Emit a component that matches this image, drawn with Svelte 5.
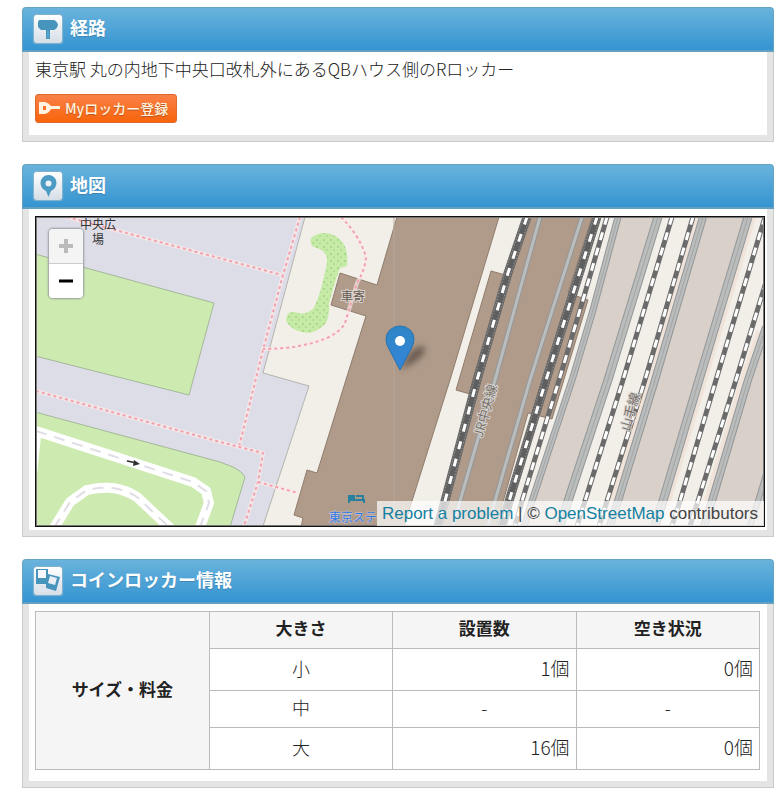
<script>
  const rows = [
    { size: '小', total: '1個', free: '0個' },
    { size: '中', total: '-', free: '-' },
    { size: '大', total: '16個', free: '0個' }
  ];

  const platforms = [
    'M618 217L593 310L573 377L532 501L524 526H562L570 495L608 380L658 217Z',
    'M703 217L655 380L618 501L610 526H655L663 501L699 380L748 217Z',
    'M764 334L748 380L712 501L704 526H764Z'
  ];

  const edges = [
    { d: 'M540 217L495 380L460 501L453 526', w: 5 },
    { d: 'M582 217L530 380L495 501L488 526', w: 5 },
    { d: 'M618 217L593 310L573 377L532 501L524 526', w: 7 },
    { d: 'M658 217L608 380L570 495L560 526', w: 9 },
    { d: 'M703 217L655 380L618 501L610 526', w: 8 },
    { d: 'M748 217L699 380L663 501L655 526', w: 9 },
    { d: 'M766 327L748 380L712 501L704 526', w: 8 },
    { d: 'M766 474L758 501L750 526', w: 6 }
  ];

  const mainTracks = [
    'M527 217L508 273L477 380L445 501L438 526',
    'M597 217L575 287L547 377L510 498L502 526'
  ];

  const tracks = [
    'M607 217L585 293L560 377L522 501L515 526',
    'M672 217L623 380L585 501L577 526',
    'M693 217L645 380L607 501L599 526',
    'M765 217L716 380L680 501L672 526',
    'M766 282L736 380L698 501L690 526'
  ];

  const footpaths = [
    'M67 217L282 275',
    'M300 217L283 275L263 350L239 447',
    'M341 217Q360 236 366 257Q365 270 357 283L345 323Q340 332 327 338Q300 349 263 349',
    'M36 391L220 442L263 453L258 482L244 526',
    'M258 482L298 493'
  ];

  const roads = [
    'M36 431L193 482L206 491L209 503L200 527',
    'M54 528L70 502L87 490Q100 487 113 488Q126 490 137 497L170 528'
  ];
</script>

<main>
  <section class="panel">
    <header>
      <svg class="icon" viewBox="0 0 28 28" aria-hidden="true">
        <rect width="28" height="28" rx="2" fill="url(#tile)" />
        <path d="M5 5H20Q23 6 24 10Q23 14 20 15H16V24H12V15H7L4 12V7Z" fill="#4794bd" />
        <path d="M13 16H15V23H13Z" fill="#57a5cf" />
      </svg>
      <h2>経路</h2>
    </header>
    <div class="frame">
      <div class="body route">
        <p>東京駅 丸の内地下中央口改札外にあるQBハウス側のRロッカー</p>
        <button class="register" type="button">
          <svg viewBox="0 0 22 14" aria-hidden="true">
            <path fill-rule="evenodd" d="M0 1H6Q10 2 12 5H21V8H12Q10 12 6 13H0ZM4 5V9H7V5Z" fill="#fff3df" />
          </svg>
          <span>Myロッカー登録</span>
        </button>
      </div>
    </div>
  </section>

  <section class="panel">
    <header>
      <svg class="icon" viewBox="0 0 28 28" aria-hidden="true">
        <defs>
          <linearGradient id="tile" x2="0" y2="1">
            <stop offset="0" stop-color="#ffffff" />
            <stop offset="1" stop-color="#d5dde6" />
          </linearGradient>
        </defs>
        <rect width="28" height="28" rx="2" fill="url(#tile)" />
        <path fill-rule="evenodd" d="M14.500 3A8 8 0 0 1 22.500 11Q22.500 16 17 19L14.500 25L12 19Q6.500 16 6.500 11A8 8 0 0 1 14.500 3ZM14.500 8.500A3 3 0 1 0 14.500 14.500A3 3 0 1 0 14.500 8.500Z" fill="#4b9bc4" />
      </svg>
      <h2>地図</h2>
    </header>
    <div class="frame">
      <div class="body mapbody">
        <div class="map">
          <svg class="tiles" viewBox="36 217 728 309" preserveAspectRatio="xMidYMid slice" role="img" aria-label="地図">
            <defs>
              <pattern id="trees" width="7" height="7" patternUnits="userSpaceOnUse">
                <rect width="7" height="7" fill="#c6eba6" />
                <circle cx="2" cy="2" r="1" fill="#a3cf88" />
                <circle cx="5" cy="5" r="1" fill="#add993" />
              </pattern>
              <linearGradient id="pin" x2="0" y2="1">
                <stop offset="0" stop-color="#2f86c6" />
                <stop offset="1" stop-color="#3485d8" />
              </linearGradient>
              <filter id="soft" x="-50%" y="-50%" width="200%" height="200%">
                <feGaussianBlur stdDeviation="3" />
              </filter>
            </defs>
            <rect x="36" y="217" width="728" height="309" fill="#dddde8" />
            <path d="M305 217L263 373L309 386L263 526H764V217Z" fill="#f2efe9" stroke="#b5b3ae" />
            <g fill="#cdebb0" stroke="#a5b79a">
              <path d="M35 254L214 303L189 395L35 356Z" />
              <path d="M35 412L220 462L233 467Q242 471 245 477L230 527H35Z" />
            </g>
            <path d="M34 431L41 436L36 484Z" fill="#fff" />
            {#each roads as d}
              <path {d} class="road" />
              <path {d} class="roaddash" />
            {/each}
            <path d="M127 461L137 463" stroke="#333" stroke-width="1.5" />
            <path d="M134 460L140 464L133 466Z" fill="#333" />
            <path d="M311 238Q320 231 331 234Q350 241 347 266L340 268Q334 284 329 304Q330 314 326 323Q318 332 308 333Q290 331 286 320Q287 310 295 312Q304 316 313 309Q321 295 327 262Q328 252 317 248Q309 247 311 238Z" fill="url(#trees)" />
            {#each platforms.slice(1) as d}
              <path {d} fill="none" stroke="#f0e4da" stroke-width="16" />
            {/each}
            {#each platforms as d}
              <path {d} fill="#d9d0c9" />
            {/each}
            <g fill="#b09b8a" stroke="#8f7c6d">
              <path d="M397 217L377 285L340 273L331 305L366 316L349 370L317 473L307 470L294 515L303 518L301 527H404L412 501L450 380L499 217Z" />
              <path d="M527 217L509 276L491 271L456 390L470 394L437 527H496L528 413L552 419L588 300L568 293L592 217Z" />
            </g>
            <path d="M394 217V526" stroke="#b7a596" />
            {#each edges as edge}
              <path d={edge.d} fill="none" stroke="#929799" stroke-width={edge.w} />
              <path d={edge.d} fill="none" stroke="#bbbcbc" stroke-width={edge.w - 2} />
              {#if edge.w > 6}
                <path d={edge.d} fill="none" stroke="#a3a6a7" />
              {/if}
            {/each}
            {#each mainTracks as d}
              <path {d} fill="none" stroke="#686868" stroke-width="9" />
              <path {d} fill="none" stroke="#999" stroke-width="7" stroke-dasharray="1 2" />
              <path {d} fill="none" stroke="#5f5f5f" stroke-width="5" />
              <path {d} fill="none" stroke="#fff" stroke-width="3" stroke-dasharray="8 10" />
            {/each}
            {#each tracks as d}
              <path {d} fill="none" stroke="#6b6b6b" stroke-width="5" />
              <path {d} fill="none" stroke="#fff" stroke-width="3" stroke-dasharray="8 8" />
            {/each}
            {#each footpaths as d}
              <path {d} fill="none" stroke="#fbe9ea" stroke-width="4" stroke-opacity="0.7" />
              <path {d} fill="none" stroke="#f0a3ad" stroke-width="2" stroke-dasharray="3 3" />
            {/each}
            <g class="place">
              <text x="98" y="229">中央広</text>
              <text x="98" y="244">場</text>
              <text x="353" y="301" class="faded">車寄</text>
            </g>
            <text class="hotel" x="329" y="522">東京ステ</text>
            <path d="M349 495V503M349 500H364V503M351 496H354V498H351ZM356 496H363V499" fill="none" stroke="#28809f" stroke-width="2" />
            <text class="rail" transform="translate(486 411) rotate(-74)" y="4">JR中央線</text>
            <text class="rail" transform="translate(631 412) rotate(-74)" y="4">山手線</text>
            <path d="M400 370L410 352Q425 341 425 350Q422 360 400 370Z" fill="#3d332b" opacity="0.6" filter="url(#soft)" />
            <path d="M400 370L389 349Q386 344 386 339A14 13 0 0 1 414 339Q414 344 411 349Z" fill="url(#pin)" stroke="#2873b0" />
            <circle cx="400" cy="341" r="5" fill="#fff" />
          </svg>
          <div class="zoom">
            <button type="button" disabled aria-label="Zoom in">
              <svg viewBox="0 0 16 16" aria-hidden="true"><path d="M8 1V15M1 8H15" stroke="#bbb" stroke-width="4" /></svg>
            </button>
            <button type="button" aria-label="Zoom out">
              <svg viewBox="0 0 16 16" aria-hidden="true"><path d="M1 8H15" stroke="#000" stroke-width="3" /></svg>
            </button>
          </div>
          <div class="credit">
            <a href="#report">Report a problem</a> | © <a href="#osm">OpenStreetMap</a> contributors
          </div>
        </div>
      </div>
    </div>
  </section>

  <section class="panel">
    <header>
      <svg class="icon" viewBox="0 0 28 28" aria-hidden="true">
        <rect width="28" height="28" rx="2" fill="url(#tile)" />
        <path d="M2 2H14V7L26 10L22 24L12 21V17H2Z" fill="#4794bd" />
        <path d="M4 3H12V11H4Z" fill="#f6f8fb" />
        <path d="M16 9L23 11L21 18L14 16Z" fill="#e9eef4" />
        <path d="M3 18H11V21L20 25H3Z" fill="#dfe5ec" />
      </svg>
      <h2>コインロッカー情報</h2>
    </header>
    <div class="frame">
      <div class="body info">
        <table>
          <tbody>
            <tr>
              <th class="side" rowspan="4" scope="rowgroup">サイズ・料金</th>
              <th scope="col">大きさ</th>
              <th scope="col">設置数</th>
              <th scope="col">空き状況</th>
            </tr>
            {#each rows as row}
              <tr class:tall={row.total !== '-'}>
                <td>{row.size}</td>
                <td class:num={row.total !== '-'}>{row.total}</td>
                <td class:num={row.free !== '-'}>{row.free}</td>
              </tr>
            {/each}
          </tbody>
        </table>
      </div>
    </div>
  </section>
</main>

<style>
  :global(body) {
    margin: 0;
    background: #fff;
  }

  main {
    display: flex;
    flex-direction: column;
    gap: 22px;
    padding: 7px 6px 10px 22px;
    font-family: 'Noto Sans CJK JP', sans-serif;
    color: #222;
  }

  header {
    box-sizing: border-box;
    display: flex;
    align-items: center;
    gap: 8px;
    height: 45px;
    padding: 0 11px;
    border: 1px solid #66a3c2;
    border-bottom: 2px solid #649fc0;
    border-radius: 4px 4px 0 0;
    background: linear-gradient(#69b3dc, #3594d1);
  }

  .icon {
    width: 28px;
    height: 28px;
    flex: none;
    border-radius: 2px;
    box-shadow: 0 0 1px 1px #84b4cf;
  }

  h2 {
    margin: 0;
    padding-bottom: 4px;
    font-size: 18px;
    line-height: 26px;
    font-weight: 700;
    color: #fff;
    text-shadow: 0 1px 1px #3d86b3;
  }

  .frame {
    padding: 0 6px 6px;
    border: 1px solid #cbcbcb;
    border-top: 0;
    background: #e4e4e4;
  }

  .body {
    background: #fff;
  }

  .route {
    padding: 5px 6px 12px;
  }

  p {
    margin: 0 0 13px;
    font-size: 17px;
    line-height: 24px;
    font-weight: 300;
  }

  .register {
    display: flex;
    align-items: center;
    gap: 4px;
    height: 29px;
    padding: 0 8px 2px 3px;
    border: 1px solid #dd6a2d;
    border-radius: 3px;
    background: linear-gradient(#fa8048, #f9640b);
    color: #fff3df;
    font-family: inherit;
    font-size: 14px;
    line-height: 20px;
    font-weight: 500;
    text-shadow: 0 1px 1px #b6541f;
  }

  .register svg {
    width: 22px;
    height: 14px;
  }

  .mapbody {
    padding: 7px 2px 3px 6px;
  }

  .map {
    position: relative;
    box-sizing: border-box;
    height: 311px;
    border: 1px solid #111;
    outline: 1px solid #777;
    outline-offset: -2px;
    overflow: hidden;
  }

  .tiles {
    display: block;
    width: 100%;
    height: 100%;
  }

  .road {
    fill: none;
    stroke: #fff;
    stroke-width: 10;
  }

  .roaddash {
    fill: none;
    stroke: #e0dde6;
    stroke-width: 2;
    stroke-dasharray: 11 8;
  }

  .place {
    font-size: 12px;
    fill: #333;
    text-anchor: middle;
  }

  .faded {
    fill: #665b53;
    stroke: #d8d0ca;
    stroke-width: 2;
    paint-order: stroke;
  }

  .hotel {
    font-size: 12px;
    fill: #2f78e0;
    stroke: #cfc8d0;
    stroke-width: 1;
    paint-order: stroke;
  }

  .rail {
    font-size: 13px;
    fill: #77716c;
    stroke: #d8d4d0;
    stroke-width: 2;
    paint-order: stroke;
    text-anchor: middle;
  }

  .zoom {
    position: absolute;
    top: 12px;
    left: 13px;
    display: flex;
    flex-direction: column;
    border-radius: 4px;
    overflow: hidden;
    box-shadow: 0 0 2px 1px #9a9aa2;
  }

  .zoom button {
    display: grid;
    place-items: center;
    width: 34px;
    height: 34px;
    padding: 0;
    border: 0;
    background: #fff;
  }

  .zoom button:disabled {
    height: 35px;
    border-bottom: 1px solid #ccc;
    background: #f4f4f4;
  }

  .zoom svg {
    width: 16px;
    height: 16px;
  }

  .credit {
    position: absolute;
    right: 0;
    bottom: 0;
    padding: 0 6px 0 5px;
    background: rgb(255 255 255 / 70%);
    color: #444;
    font-family: 'Liberation Sans', sans-serif;
    font-size: 17px;
    line-height: 25px;
    white-space: nowrap;
  }

  .credit a {
    color: #1480a0;
    text-decoration: none;
  }

  .info {
    padding: 7px 7px 11px 6px;
  }

  table {
    width: 100%;
    border-collapse: collapse;
    table-layout: fixed;
  }

  th,
  td {
    box-sizing: border-box;
    height: 37px;
    padding: 0 6px 4px;
    border: 1px solid #bbb;
    text-align: center;
    line-height: 24px;
  }

  th {
    background: #f5f5f5;
    font-size: 17px;
    font-weight: 700;
  }

  .side {
    width: 24%;
  }

  td {
    font-size: 18px;
    font-weight: 300;
  }

  .tall td {
    height: 42px;
  }

  .tall .num {
    font-size: 19px;
    text-align: right;
  }
</style>
